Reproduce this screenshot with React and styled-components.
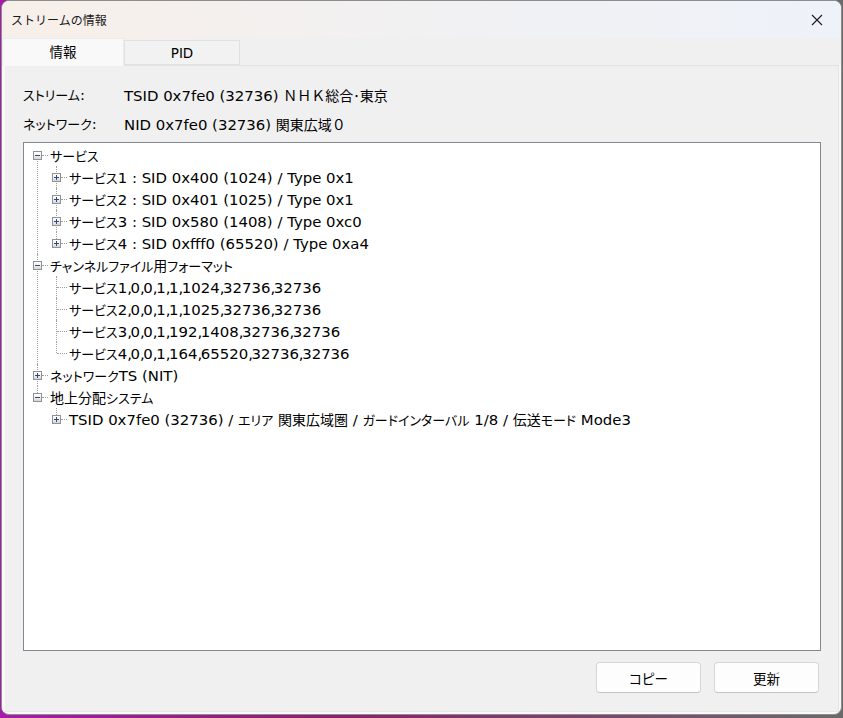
import React from "react";
import styled, { createGlobalStyle } from "styled-components";

const GlobalStyle = createGlobalStyle`
  html, body {
    margin: 0;
    height: 100%;
  }
  body {
    background: linear-gradient(90deg, #a51ca9 0, #8a2070 40%, #6a6a6a 100%);
    font-family: "DejaVu Sans", "Noto Sans CJK JP", sans-serif;
    color: #000;
  }
`;

const Window = styled.div`
  margin-left: 1px;
  width: 841px;
  height: 715px;
  box-sizing: border-box;
  border: 1px solid #8d8d8d;
  border-radius: 8px;
  overflow: hidden;
  background: #f9f9f9;
  display: flex;
  flex-direction: column;
`;

const TitleBar = styled.div`
  height: 37px;
  flex-shrink: 0;
  display: flex;
  align-items: center;
  padding-left: 9px;
  background: linear-gradient(90deg, #f7efe9 0%, #f1f1f3 55%, #eef2f9 100%);
`;

const Title = styled.span`
  font-family: "Noto Sans CJK JP", sans-serif;
  font-size: 12px;
  color: #1a1a1a;
`;

const CloseButton = styled.div`
  margin-left: auto;
  width: 46px;
  height: 37px;
  display: flex;
  align-items: center;
  justify-content: center;
  margin-right: 1px;
`;

const TabStrip = styled.div`
  height: 27px;
  flex-shrink: 0;
  display: flex;
  align-items: flex-end;
  background: #f0f0f0;
  position: relative;
  z-index: 1;
`;

const Tab = styled.div`
  box-sizing: border-box;
  width: ${(p) => (p.$active ? "122px" : "116px")};
  height: ${(p) => (p.$active ? "28px" : "25px")};
  margin-bottom: ${(p) => (p.$active ? "-1px" : "0")};
  background: ${(p) => (p.$active ? "#f9f9f9" : "#f2f2f2")};
  border: 1px solid ${(p) => (p.$active ? "#ececec" : "#e1e1e1")};
  border-bottom: ${(p) => (p.$active ? "none" : "1px solid #e1e1e1")};
  display: flex;
  align-items: center;
  justify-content: center;
  font-size: 13.5px;
  padding-bottom: ${(p) => (p.$active ? "3px" : "0")};
`;

const TabPage = styled.div`
  flex: 1;
  background: #f0f0f0;
  border-top: 1px solid #e3e3e3;
  border-right: 1px solid #e3e3e3;
  border-bottom: 1px solid #e8e8e8;
  border-left: 3px solid #f9f9f9;
  margin: 0 2px 2px 0;
  padding: 14px 0 0 18px;
  display: flex;
  flex-direction: column;
`;

const InfoGrid = styled.div`
  display: grid;
  grid-template-columns: 101px auto;
  grid-auto-rows: 29px;
  align-items: center;
  font-size: 14.9px;
  white-space: nowrap;
`;

const TreeBox = styled.div`
  margin-top: 4px;
  width: 798px;
  height: 509px;
  box-sizing: border-box;
  border: 1px solid #828790;
  background: #fff;
  padding-top: 1px;
  overflow: hidden;
`;

const NodeList = styled.ul`
  list-style: none;
  margin: 0;
  padding: 0;
`;

const Node = styled.li`
  position: relative;
  &::before {
    content: "";
    position: absolute;
    left: ${(p) => 13 + p.$level * 19}px;
    top: ${(p) => (p.$first ? "11px" : "0")};
    ${(p) => (p.$last ? "height: " + (p.$first ? 0 : 11) + "px;" : "bottom: 0;")}
    border-left: 1px dotted #a0a0a0;
  }
`;

const Row = styled.div`
  height: 22px;
  display: flex;
  align-items: center;
  font-size: 14.9px;
  white-space: nowrap;
`;

const Indent = styled.span`
  flex-shrink: 0;
  width: ${(p) => p.$w}px;
`;

const Expander = styled.span`
  position: relative;
  z-index: 1;
  flex-shrink: 0;
  box-sizing: border-box;
  width: 9px;
  height: 9px;
  border: 1px solid #919191;
  background: linear-gradient(180deg, #ffffff 0%, #f0f0f0 50%, #d6d6d6 100%);
  &::before {
    content: "";
    position: absolute;
    left: 1px;
    top: 3px;
    width: 5px;
    height: 1px;
    background: #2c4a86;
  }
  &::after {
    content: "";
    display: ${(p) => (p.$open ? "none" : "block")};
    position: absolute;
    left: 3px;
    top: 1px;
    width: 1px;
    height: 5px;
    background: #2c4a86;
  }
`;

const Dash = styled.span`
  flex-shrink: 0;
  width: ${(p) => p.$w}px;
  height: 0;
  border-top: 1px dotted #a0a0a0;
  margin-right: 2px;
`;

// kana runs: proportional widths like the UI font of the original
const Kana = styled.span`
  font-family: "Noto Sans CJK JP", sans-serif;
  font-size: ${(p) => p.$size || 13}px;
  font-feature-settings: "palt" 1;
`;

// kanji and full-width letters keep their square cell
const Kanji = styled.span`
  font-family: "Noto Sans CJK JP", sans-serif;
  font-size: ${(p) => p.$size || 14}px;
`;

const Comma = styled.span`
  letter-spacing: -1.4px;
`;

const ButtonRow = styled.div`
  width: 798px;
  display: flex;
  justify-content: flex-end;
  gap: 13px;
  margin-top: 11px;
  padding-right: 2px;
  box-sizing: border-box;
`;

const Button = styled.div`
  width: 105px;
  height: 31px;
  box-sizing: border-box;
  border: 1px solid #d6d6d6;
  border-bottom-color: #c4c4c4;
  border-radius: 4px;
  background: #fdfdfd;
  display: flex;
  align-items: center;
  justify-content: center;
`;

const classOf = (ch) => {
  if (/[\u3400-\u9fff\u3005\uff01-\uff5e]/.test(ch)) return "kanji";
  if (/[\u3000-\u30ff\uff61-\uffef]/.test(ch)) return "kana";
  return "latin";
};

const runsOf = (text) => {
  const runs = [];
  for (const ch of text) {
    const c = classOf(ch);
    const last = runs[runs.length - 1];
    if (last && last.c === c) last.t += ch;
    else runs.push({ c, t: ch });
  }
  return runs;
};

const Latin = ({ text }) =>
  text.split(/(,)/).map((p, i) =>
    p === "," ? <Comma key={i}>,</Comma> : <React.Fragment key={i}>{p}</React.Fragment>
  );

const Mixed = ({ text }) =>
  runsOf(text).map((r, i) =>
    r.c === "kanji" ? (
      <Kanji key={i}>{r.t}</Kanji>
    ) : r.c === "kana" ? (
      <Kana key={i}>{r.t}</Kana>
    ) : (
      <span key={i}>
        <Latin text={r.t} />
      </span>
    )
  );

const tree = [
  {
    label: "サービス",
    open: true,
    children: [
      { label: "サービス1 : SID 0x400 (1024) / Type 0x1", closed: true },
      { label: "サービス2 : SID 0x401 (1025) / Type 0x1", closed: true },
      { label: "サービス3 : SID 0x580 (1408) / Type 0xc0", closed: true },
      { label: "サービス4 : SID 0xfff0 (65520) / Type 0xa4", closed: true },
    ],
  },
  {
    label: "チャンネルファイル用フォーマット",
    open: true,
    children: [
      { label: "サービス1,0,0,1,1,1024,32736,32736" },
      { label: "サービス2,0,0,1,1,1025,32736,32736" },
      { label: "サービス3,0,0,1,192,1408,32736,32736" },
      { label: "サービス4,0,0,1,164,65520,32736,32736" },
    ],
  },
  { label: "ネットワークTS (NIT)", closed: true },
  {
    label: "地上分配システム",
    open: true,
    children: [
      {
        label:
          "TSID 0x7fe0 (32736) / エリア 関東広域圏 / ガードインターバル 1/8 / 伝送モード Mode3",
        closed: true,
      },
    ],
  },
];

const TreeNodes = ({ nodes, level }) => (
  <NodeList>
    {nodes.map((n, i) => {
      const expandable = n.open || n.closed;
      return (
        <Node
          key={i}
          $level={level}
          $first={level === 0 && i === 0}
          $last={i === nodes.length - 1}
        >
          <Row>
            {expandable ? (
              <>
                <Indent $w={9 + level * 19} />
                <Expander $open={n.open} />
                <Dash $w={6} />
              </>
            ) : (
              <>
                <Indent $w={14 + level * 19} />
                <Dash $w={10} />
              </>
            )}
            <span>
              <Mixed text={n.label} />
            </span>
          </Row>
          {n.open && n.children && (
            <TreeNodes nodes={n.children} level={level + 1} />
          )}
        </Node>
      );
    })}
  </NodeList>
);

const CloseIcon = () => (
  <svg width="12" height="12" viewBox="0 0 12 12">
    <path d="M1 1 L11 11 M11 1 L1 11" stroke="#1b1b1b" strokeWidth="1.1" fill="none" />
  </svg>
);

export default function App() {
  return (
    <>
      <GlobalStyle />
      <Window>
        <TitleBar>
          <Title>ストリームの情報</Title>
          <CloseButton>
            <CloseIcon />
          </CloseButton>
        </TitleBar>
        <TabStrip>
          <Tab $active>
            <Kanji $size={13.5}>情報</Kanji>
          </Tab>
          <Tab>PID</Tab>
        </TabStrip>
        <TabPage>
          <InfoGrid>
            <span>
              <Mixed text="ストリーム:" />
            </span>
            <span>
              <Mixed text="TSID 0x7fe0 (32736) ＮＨＫ総合･東京" />
            </span>
            <span>
              <Mixed text="ネットワーク:" />
            </span>
            <span>
              <Mixed text="NID 0x7fe0 (32736) 関東広域０" />
            </span>
          </InfoGrid>
          <TreeBox>
            <TreeNodes nodes={tree} level={0} />
          </TreeBox>
          <ButtonRow>
            <Button>
              <Kana $size={13.5}>コピー</Kana>
            </Button>
            <Button>
              <Kanji $size={13.5}>更新</Kanji>
            </Button>
          </ButtonRow>
        </TabPage>
      </Window>
    </>
  );
}
